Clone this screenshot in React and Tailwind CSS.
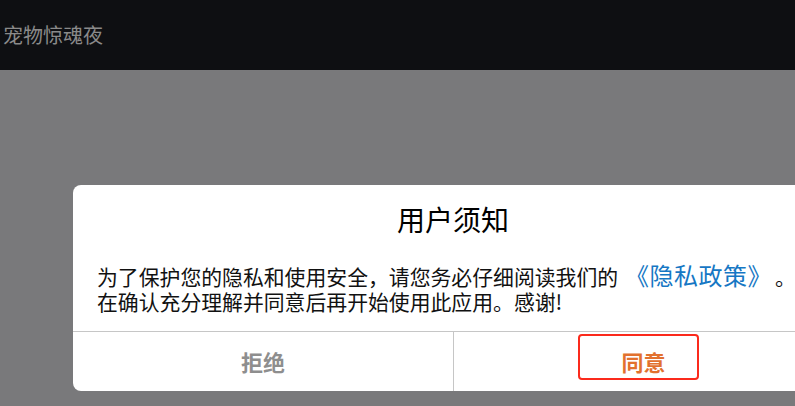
import React from "react";

export default function App() {
  return (
    <div
      className="w-[795px] h-[406px] overflow-hidden flex flex-col bg-[#79797b]"
      style={{ fontFamily: '"Noto Sans CJK SC", "Noto Sans", sans-serif' }}
    >
      <div className="h-[70px] shrink-0 bg-[#0e0f12] flex items-center pl-[3px]">
        <span className="text-[20px] leading-none text-[#8a8a8a]">宠物惊魂夜</span>
      </div>

      <div className="flex-1 relative">
        <div className="ml-[73px] mt-[115px] w-[760px] bg-white rounded-lg overflow-hidden">
          <div className="pt-[15px] text-center text-[28px] leading-[38px] text-black">用户须知</div>
          <p className="mt-[24px] pl-[24px] pb-[17px] text-[20.85px] leading-[25px] text-[#111] whitespace-nowrap">
            为了保护您的隐私和使用安全，请您务必仔细阅读我们的
            <span className="ml-[7px] text-[24px] leading-[25px] tracking-[0.5px] text-[#1677c4]">《隐私政策》</span>
            <span className="ml-[15px]">。</span>
            <br />
            在确认充分理解并同意后再开始使用此应用。感谢!
          </p>
          <div className="grid grid-cols-2 h-[60px] border-t border-[#c6c6c6]">
            <button className="flex items-center justify-center text-[22px] font-bold text-[#8e8e8e]">拒绝</button>
            <div className="relative flex items-center justify-center border-l border-[#c6c6c6]">
              <span className="text-[22px] font-bold text-[#e2712e]">同意</span>
              <div className="absolute left-[124px] top-[2px] w-[121px] h-[46px] border-2 border-[#fb2a1c] rounded-[4px]" />
            </div>
          </div>
        </div>
      </div>
    </div>
  );
}
